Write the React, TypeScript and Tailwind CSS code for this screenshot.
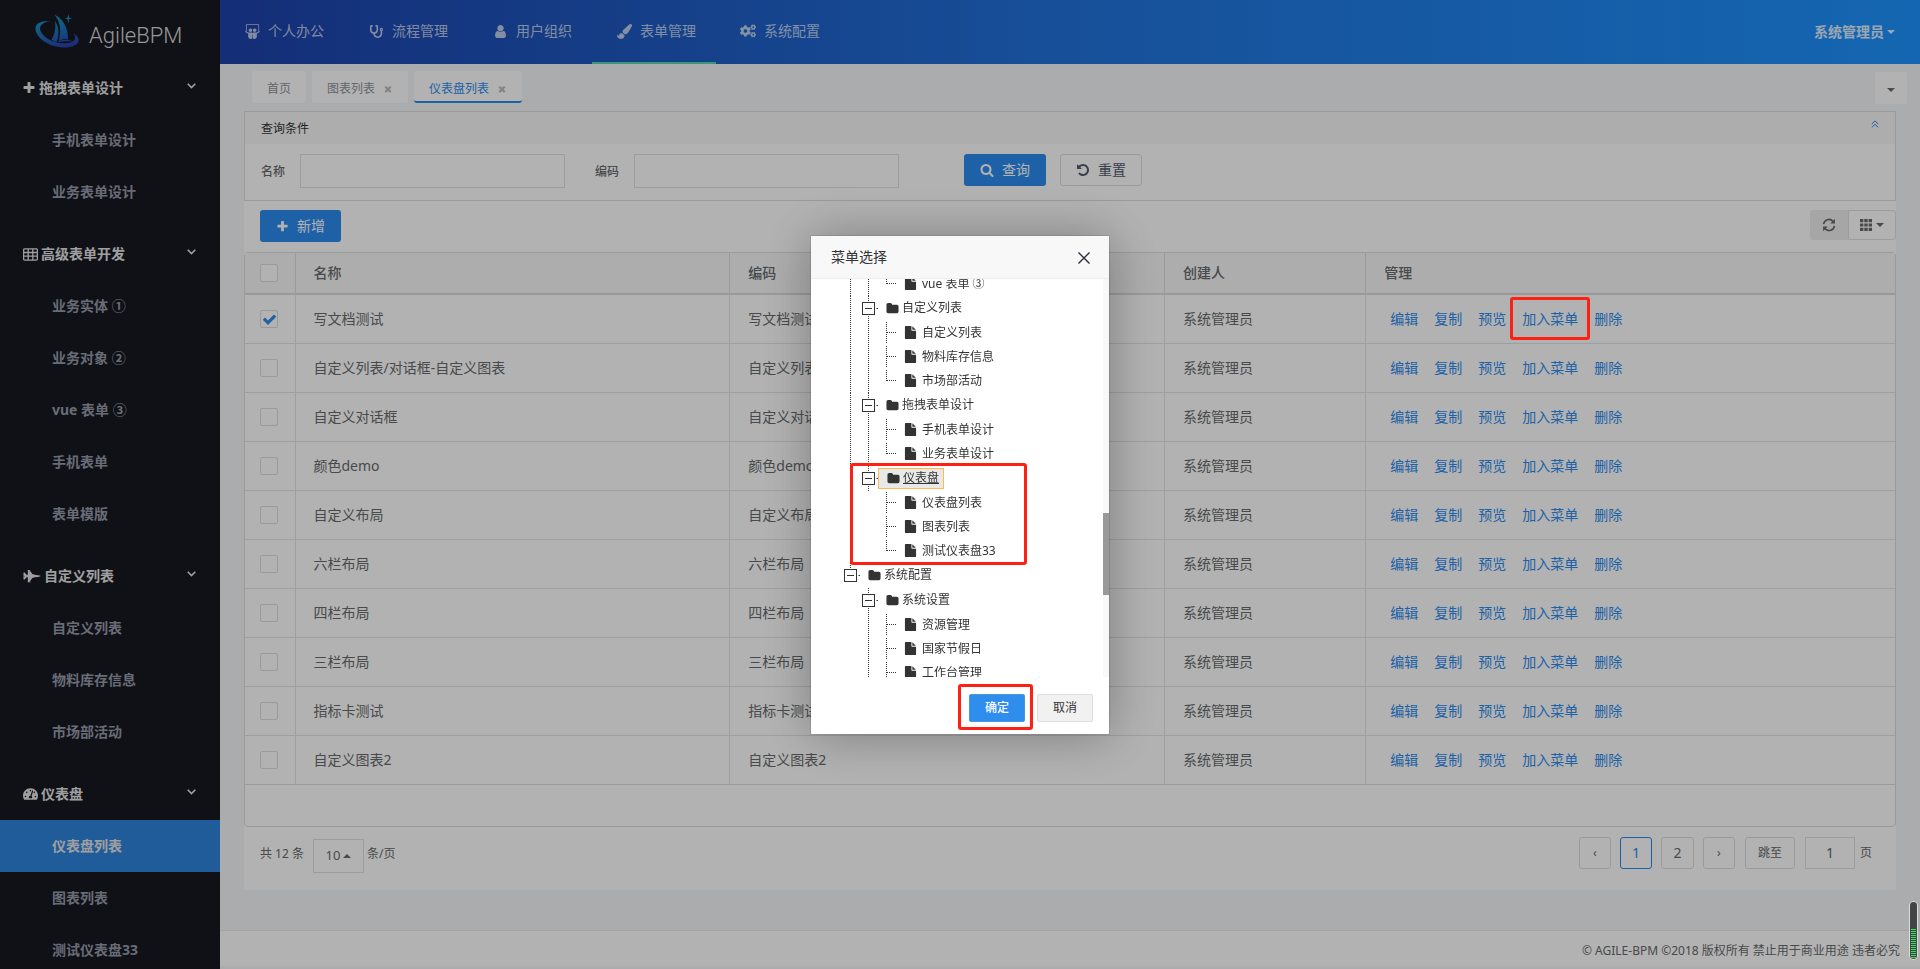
import type { ReactNode } from "react";
import {
  FaSlideshare,
  FaStethoscope,
  FaPaintBrush,
  FaCogs,
  FaFighterJet,
  FaTachometerAlt,
} from "react-icons/fa";

/* ---------- Iconos ---------- */

const PATHS = {
  plus: "M1600 736v192q0 40-28 68t-68 28h-416v416q0 40-28 68t-68 28h-192q-40 0-68-28t-28-68v-416h-416q-40 0-68-28t-28-68v-192q0-40 28-68t68-28h416v-416q0-40 28-68t68-28h192q40 0 68 28t28 68v416h416q40 0 68 28t28 68z",
  times:
    "M1490 1322q0 40-28 68l-136 136q-28 28-68 28t-68-28l-294-294-294 294q-28 28-68 28t-68-28l-136-136q-28-28-28-68t28-68l294-294-294-294q-28-28-28-68t28-68l136-136q28-28 68-28t68 28l294 294 294-294q28-28 68-28t68 28l136 136q28 28 28 68t-28 68l-294 294 294 294q28 28 28 68z",
  check:
    "M1671 566q0 40-28 68l-724 724-136 136q-28 28-68 28t-68-28l-136-136-362-362q-28-28-28-68t28-68l136-136q28-28 68-28t68 28l294 295 656-657q28-28 68-28t68 28l136 136q28 28 28 68z",
  file: "M1152 512v-472q22 14 36 28l408 408q14 14 28 36h-472zm-128 32q0 40 28 68t68 28h544v1056q0 40-28 68t-68 28h-1344q-40 0-68-28t-28-68v-1600q0-40 28-68t68-28h800v544z",
  folder:
    "M1728 608v704q0 92-66 158t-158 66h-1216q-92 0-158-66t-66-158v-960q0-92 66-158t158-66h320q92 0 158 66t66 158v32h672q92 0 158 66t66 158z",
  search:
    "M1216 832q0-185-131.5-316.5t-316.5-131.5-316.5 131.5-131.5 316.5 131.5 316.5 316.5 131.5 316.5-131.5 131.5-316.5zm512 832q0 52-38 90t-90 38q-54 0-90-38l-343-342q-179 124-399 124-143 0-273.5-55.5t-225-150-150-225-55.5-273.5 55.5-273.5 150-225 225-150 273.5-55.5 273.5 55.5 225 150 150 225 55.5 273.5q0 220-124 399l343 343q37 37 37 90z",
  undo: "M1664 896q0 156-61 298t-164 245-245 164-298 61q-172 0-327-72.5t-264-204.5q-7-10-6.5-22.5t8.5-20.5l137-138q10-9 25-9 16 2 23 12 73 95 179 147t225 52q104 0 198.5-40.5t163.5-109.5 109.5-163.5 40.5-198.5-40.5-198.5-109.5-163.5-163.5-109.5-198.5-40.5q-98 0-188 35.5t-160 101.5l137 138q31 30 14 69-17 40-59 40h-448q-26 0-45-19t-19-45v-448q0-42 40-59 39-17 69 14l130 129q107-101 244.5-156.5t284.5-55.5q156 0 298 61t245 164 164 245 61 298z",
  user: "M1536 1399q0 109-62.5 187t-150.5 78h-854q-88 0-150.5-78t-62.5-187q0-85 8.5-160.5t31.5-152 58.5-131 94-89 134.5-34.5q131 128 313 128t313-128q76 0 134.5 34.5t94 89 58.5 131 31.5 152 8.5 160.5zm-256-887q0 159-112.5 271.5t-271.5 112.5-271.5-112.5-112.5-271.5 112.5-271.5 271.5-112.5 271.5 112.5 112.5 271.5z",
};

function Icon({ name, className }: { name: keyof typeof PATHS; className?: string }) {
  return (
    <svg viewBox="0 0 1792 1792" fill="currentColor" className={className} aria-hidden="true">
      <path d={PATHS[name]} />
    </svg>
  );
}

function TableIcon() {
  return (
    <svg viewBox="0 0 15 13" className="-ml-px h-[13px] w-[15px]" aria-hidden="true">
      <rect x="0.6" y="0.9" width="13.8" height="11.200" rx="1" fill="none" stroke="currentColor" strokeWidth="1.300" />
      <path d="M1 4.500h13M1 8.200h13M5.200 1v11M9.800 1v11" stroke="currentColor" strokeWidth="1.300" />
    </svg>
  );
}

function Caret({ up = false }: { up?: boolean }) {
  return (
    <svg viewBox="0 0 8 4" className="h-1 w-2 shrink-0" fill="currentColor" aria-hidden="true">
      <path d={up ? "M0 4L4 0l4 4z" : "M0 0h8L4 4z"} />
    </svg>
  );
}

function RefreshIcon() {
  return (
    <svg viewBox="0 0 14 14" className="h-[14px] w-[14px]" aria-hidden="true">
      <path d="M1.6 6.2A5.3 5.3 0 0 1 11 3.4M12.4 7.8A5.3 5.3 0 0 1 3 10.6" fill="none" stroke="currentColor" strokeWidth="1.6" />
      <path d="M12.9 0.8v4.6H8.3zM1.1 13.2V8.6h4.6z" fill="currentColor" />
    </svg>
  );
}

function GridIcon() {
  return (
    <svg viewBox="0 0 12 12" className="h-3 w-3" fill="currentColor" aria-hidden="true">
      <path d="M0 0h3.4v3.2H0zM4.3 0h3.4v3.2H4.3zM8.6 0H12v3.2H8.6zM0 4.4h3.4v3.2H0zM4.3 4.4h3.4v3.2H4.3zM8.6 4.4H12v3.2H8.6zM0 8.8h3.4V12H0zM4.3 8.8h3.4V12H4.3zM8.6 8.8H12V12H8.6z" />
    </svg>
  );
}

function Logo() {
  return (
    <svg viewBox="0 0 44 34" className="h-[34px] w-[44px]" aria-hidden="true">
      <defs>
        <linearGradient id="logo" gradientUnits="userSpaceOnUse" x1="18" y1="0" x2="26" y2="34">
          <stop offset="0" stopColor="#149cc4" />
          <stop offset="0.55" stopColor="#1f6db8" />
          <stop offset="1" stopColor="#2a3fae" />
        </linearGradient>
      </defs>
      <g fill="url(#logo)">
        <path d="M15 7C6 6.500 0 9.500 0.500 15.500C1.500 24.500 15 33.500 29 33.500C38 33.500 44.500 30 43.500 25.500C43 23 41 21 38.500 19.500C41 23 41 26 37 28C29 31.500 13 28 7 19.500C3 14 5 9 15 7Z" />
        <path d="M19.500 0.500C28 5 33.500 14 33 25.500C29.500 24.500 26.500 25.500 23.500 27.500C26.500 18 25.500 8 19.500 0.500Z" />
        <path d="M20 7C24 13 24.500 20 22 27.500C20 28 18 27 16.500 25.500C20 20 21 13.500 20 7Z" />
        <path d="M33.300 0L34.100 3.400L37 4.300L34.100 5.200L33.300 9.500L32.500 5.200L29.800 4.300L32.500 3.400Z" />
        <path d="M22 28.300C27 25 33 25 38 27.600C32.500 26.800 27 27.300 22 28.300Z" />
      </g>
    </svg>
  );
}

/* ---------- Datos ---------- */

const nav: { texto: string; icono: ReactNode; activo?: boolean }[] = [
  { texto: "个人办公", icono: <FaSlideshare className="h-[15px] w-[15px]" /> },
  { texto: "流程管理", icono: <FaStethoscope className="h-[13px] w-[13px]" /> },
  { texto: "用户组织", icono: <Icon name="user" className="h-[15px] w-[15px]" /> },
  { texto: "表单管理", icono: <FaPaintBrush className="h-[15px] w-[15px]" />, activo: true },
  { texto: "系统配置", icono: <FaCogs className="h-4 w-4" /> },
];

const menu: { titulo: string; icono: ReactNode; items: string[] }[] = [
  {
    titulo: "拖拽表单设计",
    icono: <Icon name="plus" className="-ml-[2px] h-[14px] w-[14px]" />,
    items: ["手机表单设计", "业务表单设计"],
  },
  {
    titulo: "高级表单开发",
    icono: <TableIcon />,
    items: ["业务实体 ①", "业务对象 ②", "vue 表单 ③", "手机表单", "表单模版"],
  },
  {
    titulo: "自定义列表",
    icono: <FaFighterJet className="-ml-px h-[14px] w-[18px]" />,
    items: ["自定义列表", "物料库存信息", "市场部活动"],
  },
  {
    titulo: "仪表盘",
    icono: <FaTachometerAlt className="-ml-px h-[14px] w-[15px]" />,
    items: ["仪表盘列表", "图表列表", "测试仪表盘33"],
  },
];

const filas = [
  { nombre: "写文档测试", marcado: true },
  { nombre: "自定义列表/对话框-自定义图表" },
  { nombre: "自定义对话框" },
  { nombre: "颜色demo" },
  { nombre: "自定义布局" },
  { nombre: "六栏布局" },
  { nombre: "四栏布局" },
  { nombre: "三栏布局" },
  { nombre: "指标卡测试" },
  { nombre: "自定义图表2" },
];

const acciones = ["编辑", "复制", "预览", "加入菜单", "删除"];

type Guia = "none" | "line" | "tee" | "elbow" | "box" | "root";

const arbol: { texto: string; guias: Guia[]; hoja?: boolean; activo?: boolean }[] = [
  { texto: "vue 表单 ③", guias: ["line", "line", "elbow"], hoja: true },
  { texto: "自定义列表", guias: ["line", "box"] },
  { texto: "自定义列表", guias: ["line", "line", "tee"], hoja: true },
  { texto: "物料库存信息", guias: ["line", "line", "tee"], hoja: true },
  { texto: "市场部活动", guias: ["line", "line", "elbow"], hoja: true },
  { texto: "拖拽表单设计", guias: ["line", "box"] },
  { texto: "手机表单设计", guias: ["line", "line", "tee"], hoja: true },
  { texto: "业务表单设计", guias: ["line", "line", "elbow"], hoja: true },
  { texto: "仪表盘", guias: ["line", "box"], activo: true },
  { texto: "仪表盘列表", guias: ["line", "none", "tee"], hoja: true },
  { texto: "图表列表", guias: ["line", "none", "tee"], hoja: true },
  { texto: "测试仪表盘33", guias: ["line", "none", "elbow"], hoja: true },
  { texto: "系统配置", guias: ["root"] },
  { texto: "系统设置", guias: ["none", "box"] },
  { texto: "资源管理", guias: ["none", "line", "tee"], hoja: true },
  { texto: "国家节假日", guias: ["none", "line", "tee"], hoja: true },
  { texto: "工作台管理", guias: ["none", "line", "tee"], hoja: true },
];

/* ---------- Barra lateral ---------- */

function Sidebar() {
  return (
    <aside className="w-[220px] shrink-0 bg-[#171821] font-bold text-[#969baa]">
      <a href="#inicio" className="flex h-[62px] items-center gap-[10px] pl-[35px]">
        <Logo />
        <span className="mt-[10px] font-['Roboto'] text-[22px] leading-none font-light text-[#d8d8d8]">
          AgileBPM
        </span>
      </a>
      <nav>
        {menu.map((grupo, i) => (
          <div key={grupo.titulo} className={i > 0 ? "mt-[10px]" : ""}>
            <button className="flex h-[52px] w-full items-center pr-6 pl-6 text-[#e4e4e4]">
              {grupo.icono}
              <span className="ml-[3px] flex-1 text-left">{grupo.titulo}</span>
              <svg viewBox="0 0 9 6" className="mb-1 h-[6px] w-[9px]" aria-hidden="true">
                <path d="M0.700 0.700L4.500 4.500L8.300 0.700" fill="none" stroke="currentColor" strokeWidth="1.600" />
              </svg>
            </button>
            <ul>
              {grupo.items.map((item) => (
                <li key={item}>
                  <a
                    href="#menu"
                    className={
                      item === "仪表盘列表"
                        ? "flex h-[52px] items-center bg-[#2f83dd] pl-[52px] text-[#e4e4e4]"
                        : "flex h-[52px] items-center pl-[52px]"
                    }
                  >
                    {item}
                  </a>
                </li>
              ))}
            </ul>
          </div>
        ))}
      </nav>
    </aside>
  );
}

/* ---------- Cabecera ---------- */

function Header() {
  return (
    <header className="flex h-16 items-stretch justify-between bg-linear-to-r from-[#1d42ab] via-[#2173dc] to-[#1e93ff] text-white/70">
      <nav className="flex">
        {nav.map((n) => (
          <a
            key={n.texto}
            href="#nav"
            className={
              n.activo
                ? "flex items-center border-b-2 border-[#55d8b2] pr-5 pl-6"
                : "flex items-center border-b-2 border-transparent pr-5 pl-6"
            }
          >
            <span className="flex w-4 justify-center">{n.icono}</span>
            <span className="ml-2">{n.texto}</span>
          </a>
        ))}
      </nav>
      <button className="mr-[25px] flex items-center gap-[3px] font-bold text-white/85">
        系统管理员
        <Caret />
      </button>
    </header>
  );
}

function Tabs() {
  return (
    <div className="flex h-[47px] items-start justify-between pt-[7px] pr-[13px] pl-8 text-xs">
      <div className="flex gap-[6px]">
        <a href="#home" className="flex h-8 items-center rounded-[3px] bg-white px-[15px] pt-1 text-[#8f939c]">
          首页
        </a>
        <a href="#charts" className="flex h-8 items-center rounded-[3px] bg-white px-[15px] pt-1 text-[#8f939c]">
          图表列表
          <Icon name="times" className="ml-2 h-[12px] w-[10px] text-[#bdbdbd]" />
        </a>
        <a
          href="#dash"
          className="flex h-8 items-center rounded-[3px] border-b-2 border-[#2d8cf0] bg-white px-[15px] pt-[6px] text-[#2d8cf0]"
        >
          仪表盘列表
          <Icon name="times" className="ml-2 h-[12px] w-[10px] text-[#bdbdbd]" />
        </a>
      </div>
      <button aria-label="更多" className="mt-px flex h-8 w-8 items-center justify-center rounded-[3px] bg-white pt-1">
        <Caret />
      </button>
    </div>
  );
}

/* ---------- Búsqueda ---------- */

function SearchPanel() {
  return (
    <section className="border border-[#ddd] text-xs">
      <div className="flex h-8 items-center justify-between bg-[#f8f8f8] pr-4 pl-4">
        <h2 className="pt-px text-[#333]">查询条件</h2>
        <button aria-label="收起" className="pb-2 text-[#2d8cf0]">
          <svg viewBox="0 0 8 8" className="h-2 w-2">
            <path d="M0.800 4L4 0.900L7.200 4M0.800 7.400L4 4.300L7.200 7.400" fill="none" stroke="currentColor" />
          </svg>
        </button>
      </div>
      <form className="flex h-14 items-center pl-4" onSubmit={(e) => e.preventDefault()}>
        <label htmlFor="nombre" className="mr-[15px] font-medium">
          名称
        </label>
        <input id="nombre" type="text" className="mb-[2px] h-[34px] w-[265px] border border-[#e0e0e0] px-2" />
        <label htmlFor="codigo" className="mr-[15px] ml-[30px] font-medium">
          编码
        </label>
        <input id="codigo" type="text" className="mb-[2px] h-[34px] w-[265px] border border-[#e0e0e0] px-2" />
        <button className="mb-1 ml-[65px] flex h-8 items-center rounded-[3px] bg-[#2d8cf0] px-4 text-sm text-white">
          <Icon name="search" className="mr-[8px] h-[14px] w-[14px]" />
          查询
        </button>
        <button
          type="reset"
          className="mb-1 ml-[14px] flex h-8 items-center rounded-[3px] border border-[#ddd] px-[15px] text-sm text-[#515a6e]"
        >
          <Icon name="undo" className="mr-2 h-[14px] w-[14px]" />
          重置
        </button>
      </form>
    </section>
  );
}

/* ---------- Tabla ---------- */

function Check({ id, marcado = false }: { id: string; marcado?: boolean }) {
  return (
    <span className="relative block h-[18px] w-[18px]">
      <input
        type="checkbox"
        aria-label={id}
        defaultChecked={marcado}
        className="block h-[18px] w-[18px] appearance-none rounded-[2px] border border-[#ddd] bg-white"
      />
      {marcado && <Icon name="check" className="absolute top-[2px] left-[2px] h-[15px] w-[15px] text-[#2d8cf0]" />}
    </span>
  );
}

function DataTable() {
  return (
    <div className="rounded-[4px] border border-[#ddd] pb-[41px]">
      <table className="w-full table-fixed border-collapse text-left">
        <colgroup>
          <col className="w-[50px]" />
          <col className="w-[26.35%]" />
          <col className="w-[26.35%]" />
          <col className="w-[12.2%]" />
          <col />
        </colgroup>
        <thead>
          <tr className="h-[41px] border-b-2 border-[#ddd] bg-[#f8f8f8]">
            <th className="border-r border-[#ddd] pl-[15px]">
              <Check id="全选" />
            </th>
            <th className="border-r border-[#ddd] pl-[18px] font-medium">名称</th>
            <th className="border-r border-[#ddd] pl-[18px] font-medium">编码</th>
            <th className="border-r border-[#ddd] pl-[18px] font-medium">创建人</th>
            <th className="pl-[18px] font-medium">管理</th>
          </tr>
        </thead>
        <tbody>
          {filas.map((fila, i) => (
            <tr key={fila.nombre} className="h-[49px] border-b border-[#e4e4e4] last:border-[#ddd]">
              <td className="border-r border-[#e4e4e4] pl-[15px]">
                <Check id={fila.nombre} marcado={fila.marcado} />
              </td>
              <td className="border-r border-[#e4e4e4] pl-[18px]">{fila.nombre}</td>
              <td className="border-r border-[#e4e4e4] pl-[18px]">{fila.nombre}</td>
              <td className="border-r border-[#e4e4e4] pl-[18px]">系统管理员</td>
              <td className="pl-6">
                <div className="flex gap-4 text-[#2d8cf0]">
                  {acciones.map((a) => (
                    <a key={a} href="#accion" className="relative">
                      {a}
                      {i === 0 && a === "加入菜单" && (
                        <span className="absolute -inset-x-3 -top-3 -bottom-[11px] z-50 rounded-[3px] border-3 border-[#ff2014]" />
                      )}
                    </a>
                  ))}
                </div>
              </td>
            </tr>
          ))}
        </tbody>
      </table>
    </div>
  );
}

function Pagination() {
  return (
    <div className="flex h-[63px] items-start justify-between pr-6 pl-4 text-xs">
      <div className="flex items-center pt-3">
        <span className="pb-1">共 12 条</span>
        <button className="mr-[3px] ml-[9px] flex h-[34px] w-[51px] items-center justify-center gap-[3px] border border-[#e0e0e0] text-[13px]">
          10
          <Caret up />
        </button>
        <span className="pb-1">条/页</span>
      </div>
      <div className="flex items-center pt-[10px]">
        <button className="mr-[9px] h-8 w-8 rounded-[3px] border border-[#ddd]">‹</button>
        <button className="mr-[9px] h-8 w-8 rounded-[3px] border border-[#2d8cf0] text-sm text-[#2d8cf0]">1</button>
        <button className="mr-[9px] h-8 w-[33px] rounded-[3px] border border-[#ddd] text-sm">2</button>
        <button className="mr-[10px] h-8 w-8 rounded-[3px] border border-[#ddd]">›</button>
        <button className="mr-[10px] h-8 w-[50px] rounded-[3px] border border-[#ddd]">跳至</button>
        <input
          aria-label="页码"
          defaultValue="1"
          className="mr-[5px] h-8 w-[50px] border border-[#e0e0e0] text-center text-sm"
        />
        <span>页</span>
      </div>
    </div>
  );
}

/* ---------- Diálogo ---------- */

function Guide({ tipo }: { tipo: Guia }) {
  return (
    <svg width="18" height="25" className="shrink-0" stroke="#333" aria-hidden="true">
      {(tipo === "line" || tipo === "box") && <path d="M8.500 0V25" strokeDasharray="1 1" />}
      {tipo === "root" && <path d="M8.500 0V6" strokeDasharray="1 1" />}
      {tipo === "tee" && <path d="M8.500 2V23M9 12.500H19" fill="none" strokeDasharray="1 1" />}
      {tipo === "elbow" && <path d="M8.500 2V13M9 12.500H19" fill="none" strokeDasharray="1 1" />}
      {(tipo === "box" || tipo === "root") && (
        <>
          <rect x="2.500" y="6.500" width="12" height="12" fill="#fff" />
          <path d="M5 12.500H12M16.500 12.500H18" />
        </>
      )}
    </svg>
  );
}

function Dialog() {
  return (
    <div className="fixed inset-0 z-40 flex items-center justify-center bg-black/30">
      <div
        role="dialog"
        aria-label="菜单选择"
        className="flex w-[300px] flex-col rounded-[2px] border border-black/10 bg-white bg-clip-padding text-[#333] shadow-[1px_1px_50px_rgba(0,0,0,0.3)]"
      >
        <div className="flex h-[43px] items-center justify-between border-b border-[#eee] bg-[#f8f8f8] pr-[19px] pl-5">
          <h2 className="text-sm">菜单选择</h2>
          <button aria-label="关闭" className="pt-[2px]">
            <svg viewBox="0 0 12 12" className="h-3 w-3" stroke="#2d2c3b" strokeWidth="1.400">
              <path d="M0.500 0.500L11.500 11.500M11.500 0.500L0.500 11.500" />
            </svg>
          </button>
        </div>

        {/* Árbol */}
        <div className="flex h-[398px] overflow-hidden text-xs">
          <ul className="-mt-[7px] flex-1 pl-[31px]">
            {arbol.map((n, i) => (
              <li
                key={i}
                className={n.hoja ? "relative flex h-6 items-center overflow-hidden" : "relative flex h-[25px] items-center"}
              >
                {n.guias.map((g, j) => (
                  <Guide key={j} tipo={g} />
                ))}
                <a
                  href="#nodo"
                  className={
                    n.activo
                      ? "flex h-[21px] items-center border border-[#ffb951] bg-[#e8e8e8] pr-1 pl-2 underline"
                      : "flex items-center pl-2"
                  }
                >
                  {n.hoja ? (
                    <Icon name="file" className="mr-[5px] h-[13px] w-[13px]" />
                  ) : (
                    <Icon name="folder" className="mr-[3px] h-[13px] w-[13px]" />
                  )}
                  {n.texto}
                </a>
                {n.activo && (
                  <span className="absolute top-[-3px] left-[8px] z-10 h-[102px] w-[177px] rounded-[3px] border-3 border-[#ff2014]" />
                )}
              </li>
            ))}
          </ul>
          <div className="w-[6px] bg-[#f8f8f8] pt-[234px]">
            <div className="h-[82px] bg-[#999]" />
          </div>
        </div>

        <div className="flex h-[57px] items-start justify-end gap-3 pt-[17px] pr-4 text-xs">
          <button className="relative h-7 w-14 rounded-[2px] border border-[#4898d5] bg-[#2e8ded] font-medium text-white">
            确定
            <span className="absolute -top-[11px] -right-[9px] -bottom-[9px] -left-3 rounded-[3px] border-3 border-[#ff2014]" />
          </button>
          <button className="h-7 w-14 rounded-[2px] border border-[#dedede] bg-[#f1f1f1]">取消</button>
        </div>
      </div>
    </div>
  );
}

/* Indicador flotante en la esquina inferior derecha */
function Meter() {
  return (
    <div className="fixed right-[2px] bottom-[9px] z-50 flex h-[59px] w-[9px] flex-col justify-end overflow-hidden rounded-[4px] border border-[#ddd] bg-[#444] p-px">
      {Array.from({ length: 15 }, (_, i) => (
        <span key={i} className="mt-px h-px bg-[#2fe05c]" />
      ))}
    </div>
  );
}

export default function App() {
  return (
    <div className="flex h-screen overflow-hidden bg-[#f5f7fa] font-['Noto_Sans','Noto_Sans_CJK_SC',sans-serif] text-sm text-[#676a6c]">
      <Sidebar />
      <div className="flex min-w-0 flex-1 flex-col">
        <Header />
        <Tabs />
        <main className="mr-6 ml-6 bg-white">
          <SearchPanel />
          <div className="flex h-[51px] items-start justify-between pt-[9px]">
            <button className="ml-4 flex h-8 items-center rounded-[3px] bg-[#2d8cf0] px-4 text-white">
              <Icon name="plus" className="mr-2 h-[13px] w-[13px]" />
              新增
            </button>
            <div className="flex h-[30px]">
              <button aria-label="刷新" className="flex w-[38px] items-center justify-center rounded-l-[3px] bg-[#eee]">
                <RefreshIcon />
              </button>
              <button
                aria-label="列"
                className="flex w-12 items-center justify-center gap-1 rounded-r-[3px] border border-[#e0e0e0]"
              >
                <GridIcon />
                <Caret />
              </button>
            </div>
          </div>
          <DataTable />
          <Pagination />
        </main>
        <footer className="mt-auto mb-[3px] flex h-9 items-center justify-end border-t border-[#e7eaec] bg-white pt-1 pr-5 text-xs">
          © AGILE-BPM ©2018 版权所有 禁止用于商业用途 违者必究
        </footer>
      </div>
      <Dialog />
      <Meter />
    </div>
  );
}
